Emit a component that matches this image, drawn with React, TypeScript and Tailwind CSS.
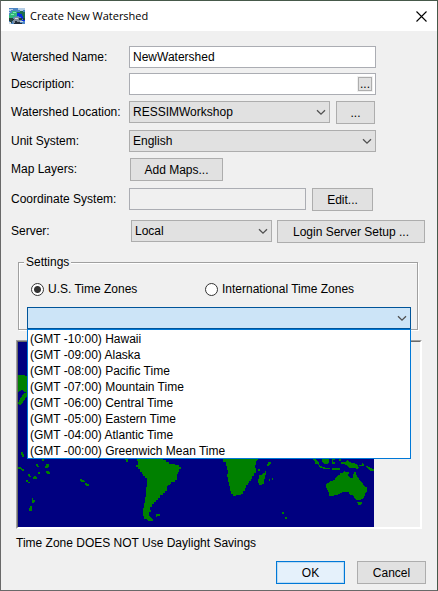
import type { ReactNode } from "react";

const timeZones = [
  "(GMT -10:00) Hawaii",
  "(GMT -09:00) Alaska",
  "(GMT -08:00) Pacific Time",
  "(GMT -07:00) Mountain Time",
  "(GMT -06:00) Central Time",
  "(GMT -05:00) Eastern Time",
  "(GMT -04:00) Atlantic Time",
  "(GMT -00:00) Greenwich Mean Time",
];

const buttonClass =
  "h-[23px] shrink-0 border border-[#adadad] bg-[#e1e1e1] text-center hover:border-[#0078d7]";

function AppIcon() {
  return (
    <svg width="16" height="16" viewBox="0 0 16 16" shapeRendering="crispEdges" aria-hidden="true">
      <path fill="#4d86c4" d="M0 0h16v16H0z" />
      <path fill="#b5cfe6" d="M0 1h4v1H2v1H0zM9 0h7v2h-2v1h-3V2H9zM0 4h1v1H0z" />
      <path fill="#1f6f4c" d="M8 4h3V3h3v1h2v7h-3V8h-2V6H8z" />
      <path fill="#2fb878" d="M3 3h4v1h1v1h2v1H8v2H6v1H4v1H0V7h1V5h2z" />
      <path fill="#7fe0b8" d="M4 4h3v1H4zM2 6h3v1H2z" />
      <path fill="#0a2be0" d="M8 5h3v1h2v2h1v3h-2V9h-2V8H8zM13 12h3v1h-3z" />
      <path fill="#24413c" d="M0 10h4v1h2v2H3v2H1v-2H0zM10 10h3v2h-3zM14 10h2v2h-2z" />
      <path fill="#7f8c9c" d="M5 9h5v3h2v2H8v-1H6v2H4v-3h1z" />
      <path fill="#d3dae2" d="M6 10h3v1H6zM0 14h2v2H0zM11 13h3v1h-3z" />
      <path fill="#222c38" d="M6 13h2v1h3v1h2v1H5v-1h1z" />
    </svg>
  );
}

function Chevron() {
  return (
    <svg
      className="pointer-events-none absolute top-2 right-1"
      width="10"
      height="7"
      viewBox="0 0 10 7"
      fill="none"
      stroke="#505050"
      strokeWidth="1.3"
      aria-hidden="true"
    >
      <path d="M1 1.2 5 5.2 9 1.2" />
    </svg>
  );
}

function Row({ id, label, className, children }: { id: string; label: string; className: string; children: ReactNode }) {
  return (
    <div className={`flex h-[23px] items-start ${className}`}>
      <label htmlFor={id} className="w-[118px] shrink-0 leading-[23px] whitespace-nowrap">
        {label}
      </label>
      {children}
    </div>
  );
}

function Combo({ id, value, className }: { id: string; value: string; className: string }) {
  return (
    <div className={`relative ${className}`}>
      <select
        id={id}
        className="block h-[22px] w-full appearance-none border border-[#adadad] bg-[#e1e1e1] pl-[3px] outline-none"
      >
        <option>{value}</option>
      </select>
      <Chevron />
    </div>
  );
}

// Three map units to the pixel
function WorldMap() {
  return (
    <svg
      className="block bg-[#000080]"
      width="356"
      height="185"
      viewBox="0 0 1068 555"
      fill="#008000"
      shapeRendering="crispEdges"
      role="img"
      aria-label="World time zone map"
    >
      <g transform="translate(-54 -36)">
        <path d="M54 135H72L84 142V186H76L66 180L54 186ZM84 186V198L74 208L66 222L57 226L54 218L60 206L66 198L76 188Z" />
        <path d="M64 366H70V372H73V381H67V375H64Z" />
      </g>
      <g transform="translate(-54 294)">
        <path d="M54 81H62L66 86L73 88V93H66L60 87H54ZM108 72H113V77H117V82H111V77H108ZM126 56H132V63H126ZM138 72H148V80L144 84H136V78H138ZM138 94H144L150 96L149 101H140ZM84 103H90V108H94V112H88V108H84ZM114 95H120V101H114ZM99 111L105 107L110 112V116H99ZM78 121H84V125H90V129H83V126H78ZM96 174H99V180H105V184L101 189H97ZM90 198L97 199V207L94 213H87V205H90Z" />
        <path d="M239 118H245L255 124V127H248L239 122ZM255 130H261L267 133V137H260L255 133ZM376 56H384V66H378V61H376Z" />
        <path d="M410 54H489V59H499V65H508V72H526V76H537V80H543V87H537V95H533V102H530V120H524V127H513L510 135H504L501 144V152H495V159H489V165H481V173H474V179H468V185H461V191H456V200H450V209H453V217H447V226L458 238V243H446L440 237H434L429 225V205H432V188H435V170H438V140H441V114H436V108H430V102H425V96H419V88H414V81H409V74H414V64H410Z" />
        <path d="M468 224L473 221L480 224V228H473L468 231Z" />
      </g>
      <g transform="translate(600 294)">
        <path d="M16 54H120L118 64H115V72L110 78V85H113V98H108V107H103V117H98V123H94V128H90V136H84V145H80V153H74V161H68V165H58L53 168H47L44 163H40V154H37V144L34 138V131L31 126V111H28V103H30V89H27V78H23V66H16Z" />
        <path d="M136 98H141V93H144V103L141 107V114L137 122V131L132 134H124L120 128V120L123 115V106H130ZM120 87H126V93H120ZM147 76L152 66H158V73L152 78ZM153 118H157V123H153ZM162 114H166V119H162Z" />
        <path d="M282 54H291L296 62L304 69V75L313 80L321 83H336V88H320L306 82L298 72H292V66L286 61ZM312 54H334V62L330 72H318L312 65ZM341 54H350V60H344L347 66H352V72H342ZM342 84H365V89H342ZM363 54H368V63H363ZM368 66H382L388 60L396 67L410 70L418 75L424 84L416 88L408 82L399 86L388 78L380 72H368ZM423 75H436V79H423ZM432 69L439 72V77H434ZM443 75L451 80L463 86L468 89V93H459L443 80Z" />
        <path d="M325 131L342 122L352 120V113L362 106H367V100H373L380 94L393 97L390 107L398 115H404V108L409 96L413 97L417 109L422 113L425 122L434 131L441 139L447 143V155L441 162L438 174L426 180H418L411 176L405 166H397L392 157H374L356 165L333 169V159L329 150L325 143ZM418 187H432V192L426 197L420 193ZM192 216H198V221H192ZM198 230H207V236H202Z" />
      </g>
    </svg>
  );
}

export default function App() {
  return (
    <main
      className="border border-t-[#46594a] border-r-[#46594a] border-b-[#696969] border-l-[#696969] bg-[#f0f0f0] text-xs text-black"
      style={{ fontFamily: '"Liberation Sans", Arial, sans-serif' }}
    >
      <header className="flex h-[30px] items-center bg-white pr-2.5 pl-2">
        <AppIcon />
        <h1 className="ml-[5px] flex-1 font-['Open_Sans',sans-serif] text-[11px]">Create New Watershed</h1>
        <button type="button" aria-label="Close">
          <svg width="11" height="11" viewBox="0 0 11 11" stroke="#000" strokeWidth="1.1" aria-hidden="true">
            <path d="M.5.5l10 10M10.5.5l-10 10" />
          </svg>
        </button>
      </header>

      <form className="pt-[15px] pb-1.5">
        <div className="pl-2.5">
          <Row id="name" label="Watershed Name:" className="">
            <input
              id="name"
              defaultValue="NewWatershed"
              className="mr-[61px] h-[22px] min-w-0 flex-1 border border-[#abadb3] bg-white px-[3px] outline-none"
            />
          </Row>
          <Row id="description" label="Description:" className="mt-1">
            <div className="mr-[61px] flex h-[22px] min-w-0 flex-1 items-center border border-[#abadb3] bg-white pr-[3px]">
              <input id="description" className="h-full min-w-0 flex-1 px-[3px] outline-none" />
              <button
                type="button"
                aria-label="Edit description"
                className="h-3.5 w-3.5 border border-[#adadad] bg-[#e1e1e1] text-center leading-3 outline outline-[#f0f0f0]"
              >
                ...
              </button>
            </div>
          </Row>
          <Row id="location" label="Watershed Location:" className="mt-[5px]">
            <Combo id="location" value="RESSIMWorkshop" className="min-w-0 flex-1" />
            <button type="button" aria-label="Browse" className={`${buttonClass} mr-[62px] ml-1.5 w-[39px]`}>
              ...
            </button>
          </Row>
          <Row id="units" label="Unit System:" className="mt-1.5">
            <Combo id="units" value="English" className="mr-[61px] min-w-0 flex-1" />
          </Row>
          <Row id="layers" label="Map Layers:" className="mt-[5px]">
            <button id="layers" type="button" className={`${buttonClass} ml-px w-[93px]`}>
              Add Maps...
            </button>
          </Row>
          <Row id="coordinates" label="Coordinate System:" className="mt-[7px]">
            <input
              id="coordinates"
              readOnly
              className="h-[22px] min-w-0 flex-1 border border-[#abadb3] bg-[#f0f0f0] px-[3px] outline-none"
            />
            <button type="button" className={`${buttonClass} mr-16 ml-1.5 w-[61px]`}>
              Edit...
            </button>
          </Row>
          <Row id="server" label="Server:" className="mt-[9px]">
            <Combo id="server" value="Local" className="ml-0.5 min-w-0 flex-1" />
            <button type="button" className={`${buttonClass} mr-3 ml-[5px] w-[148px]`}>
              Login Server Setup ...
            </button>
          </Row>
        </div>

        <fieldset className="mr-[19px] ml-[17px] border border-[#a0a0a0] pr-1.5 pl-2 shadow-[1px_1px_0_#fff,inset_1px_1px_0_#fff]">
          <legend className="-ml-[3px] bg-[#f0f0f0] px-0.5 leading-[38px]">Settings</legend>
          <div className="flex items-center">
            <label className="flex w-[174px] items-center gap-1 pl-1">
              <input
                type="radio"
                name="zone"
                defaultChecked
                className="size-[13px] appearance-none rounded-full border border-[#333] bg-white checked:bg-[radial-gradient(#333_0_3px,#fff_4px)]"
              />
              U.S. Time Zones
            </label>
            <label className="flex items-center gap-1 pl-1">
              <input
                type="radio"
                name="zone"
                className="size-[13px] appearance-none rounded-full border border-[#333] bg-white checked:bg-[radial-gradient(#333_0_3px,#fff_4px)]"
              />
              International Time Zones
            </label>
          </div>
          <div className="relative mt-2.5">
            <select
              aria-label="Time zone"
              defaultValue=""
              className="block h-[22px] w-full appearance-none border border-[#005499] bg-[#cce4f7] pl-1 outline-none"
            >
              <option value="" />
              {timeZones.map((zone) => (
                <option key={zone}>{zone}</option>
              ))}
            </select>
            <Chevron />
            <ul className="absolute top-full right-0 left-0 z-10 border border-[#0078d7] bg-white">
              {timeZones.map((zone) => (
                <li key={zone} className="h-4 px-0.5 leading-[18px]">
                  {zone}
                </li>
              ))}
            </ul>
          </div>
        </fieldset>

        <div className="mt-2.5 mr-[15px] ml-[15px] border border-t-[#a0a0a0] border-r-white border-b-white border-l-[#a0a0a0]">
          <div className="border border-t-[#696969] border-r-white border-b-white border-l-[#696969]">
            <WorldMap />
          </div>
        </div>
        <p className="mt-1.5 ml-[15px]">Time Zone DOES NOT Use Daylight Savings</p>
        <div className="mt-2.5 mr-[11px] flex justify-end gap-3">
          <button
            type="submit"
            className="h-[23px] w-[69px] border border-[#0078d7] bg-[#e5f1fb] text-center shadow-[inset_0_0_0_1px_#bcdcf4]"
          >
            OK
          </button>
          <button type="button" className={`${buttonClass} w-[69px]`}>
            Cancel
          </button>
        </div>
      </form>
    </main>
  );
}
